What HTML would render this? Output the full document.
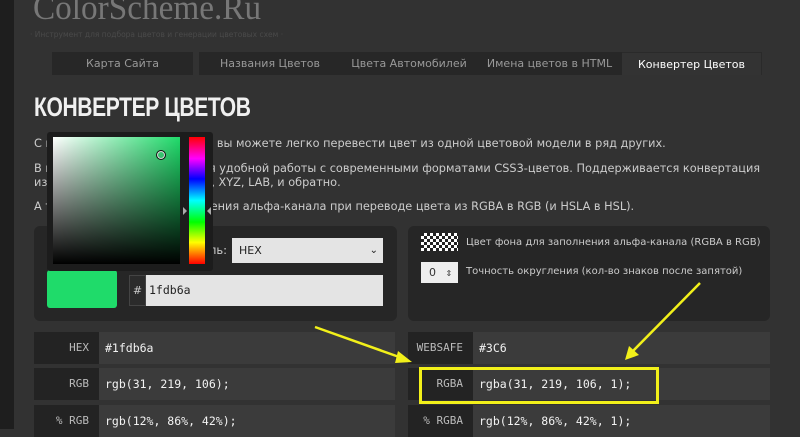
<!DOCTYPE html>
<html><head><meta charset="utf-8"><style>
*{margin:0;padding:0;box-sizing:border-box}
body{width:800px;height:429px;overflow:hidden;background:#323232;font-family:"DejaVu Sans","Liberation Sans",sans-serif;color:#ddd;position:relative}
.abs{position:absolute}
.logo{left:33px;top:-12px;font-family:"Liberation Serif",serif;font-size:35px;color:#777;transform:scaleX(.95);transform-origin:left}
.sub{left:30px;top:30px;font-size:7.5px;color:#4a4a4a}
.nav{top:52px;height:23px;background:#272727;font-size:11px;color:#999;text-align:center;line-height:23px}
h1{position:absolute;left:34px;top:92px;font-family:"Liberation Sans",sans-serif;font-weight:bold;font-size:27px;color:#f0f0f0;transform:scaleX(.78);transform-origin:left;letter-spacing:-0.5px}
.p{left:34px;font-size:11.3px;color:#ccc;white-space:nowrap}
.panel{background:#262626;border-radius:6px}
.lab{background:#232323;color:#bbb;font-size:11px;text-align:right;padding-right:10px;line-height:32px;font-family:"DejaVu Sans Mono",monospace}
.val{background:#3b3b3b;color:#f2f2f2;font-size:11.5px;padding-left:6px;line-height:32px;font-family:"DejaVu Sans Mono",monospace}
</style></head><body>
<div class="abs" style="left:0;top:0;width:14px;height:429px;background:#1e1e1e"></div>
<div class="abs logo">ColorScheme.Ru</div>
<div class="abs sub">· Инструмент для подбора цветов и генерации цветовых схем ·</div>
<div class="abs nav" style="left:52px;width:141px">Карта Сайта</div>
<div class="abs nav" style="left:199px;width:142px">Названия Цветов</div>
<div class="abs nav" style="left:341px;width:136px">Цвета Автомобилей</div>
<div class="abs nav" style="left:477px;width:145px">Имена цветов в HTML</div>
<div class="abs nav" style="left:622px;width:140px;background:#333;color:#fff;border-top:1px solid #2a2a2a;border-right:1px solid #2a2a2a">Конвертер Цветов</div>
<h1>КОНВЕРТЕР ЦВЕТОВ</h1>
<div class="abs p" style="top:137px">С помощью конвертер цветов вы можете легко перевести цвет из одной цветовой модели в ряд других.</div>
<div class="abs p" style="top:162px;line-height:14px">В первую очередь служит для удобной работы с современными форматами CSS3-цветов. Поддерживается конвертация<br>из HEX, HSL, HSV, RGB в CMYK, XYZ, LAB, и обратно.</div>
<div class="abs p" style="top:200px">А также интервал для замещения альфа-канала при переводе цвета из RGBA в RGB (и HSLA в HSL).</div>

<div class="abs panel" style="left:34px;top:226px;width:363px;height:95px"></div>
<div class="abs" style="left:209px;top:243px;font-size:11.5px;color:#ccc">ль:</div>
<div class="abs" style="left:232px;top:238px;width:151px;height:25px;background:#e4e4e4;color:#222;font-size:11px;line-height:25px;padding-left:7px">HEX<span style="position:absolute;right:5px;font-size:10px">&#8964;</span></div>
<div class="abs" style="left:47px;top:270px;width:70px;height:38px;background:#1fdb6a;border-radius:3px"></div>
<div class="abs" style="left:129px;top:275px;width:17px;height:31px;background:#2b2b2b;border:1px solid #444;color:#ccc;font-size:11px;line-height:29px;text-align:center">#</div>
<div class="abs" style="left:146px;top:275px;width:237px;height:31px;background:#e4e4e4;color:#222;font-size:11.5px;line-height:31px;padding-left:3px;font-family:'DejaVu Sans Mono',monospace">1fdb6a</div>

<div class="abs panel" style="left:408px;top:226px;width:362px;height:95px"></div>
<div class="abs" style="left:421px;top:233px;width:37px;height:18px;background:repeating-conic-gradient(#fff 0 25%,#222 0 50%) 0 0/6px 6px"></div>
<div class="abs" style="left:466px;top:237px;font-size:10px;color:#ccc">Цвет фона для заполнения альфа-канала (RGBA в RGB)</div>
<div class="abs" style="left:421px;top:262px;width:37px;height:21px;background:#eee;color:#333;font-size:11px;line-height:21px;padding-left:8px">0 <span style="font-size:8px;margin-left:6px">&#8661;</span></div>
<div class="abs" style="left:466px;top:266px;font-size:10px;color:#ccc">Точность округления (кол-во знаков после запятой)</div>

<div class="abs lab" style="left:34px;top:332px;width:65px;height:32px">HEX</div><div class="abs val" style="left:99px;top:332px;width:296px;height:32px">#1fdb6a</div>
<div class="abs lab" style="left:34px;top:368px;width:65px;height:32px">RGB</div><div class="abs val" style="left:99px;top:368px;width:296px;height:32px">rgb(31, 219, 106);</div>
<div class="abs lab" style="left:34px;top:405px;width:65px;height:32px">% RGB</div><div class="abs val" style="left:99px;top:405px;width:296px;height:32px">rgb(12%, 86%, 42%);</div>
<div class="abs lab" style="left:408px;top:332px;width:65px;height:32px">WEBSAFE</div><div class="abs val" style="left:473px;top:332px;width:297px;height:32px">#3C6</div>
<div class="abs lab" style="left:408px;top:368px;width:65px;height:32px">RGBA</div><div class="abs val" style="left:473px;top:368px;width:297px;height:32px">rgba(31, 219, 106, 1);</div>
<div class="abs lab" style="left:408px;top:405px;width:65px;height:32px">% RGBA</div><div class="abs val" style="left:473px;top:405px;width:297px;height:32px">rgb(12%, 86%, 42%, 1);</div>
<div class="abs" style="left:419px;top:367px;width:240px;height:37px;border:3px solid #f2f01a"></div>

<div class="abs" style="left:47px;top:132px;width:166px;height:139px;background:#1c1c1c;border-radius:3px"></div>
<div class="abs" style="left:53px;top:137px;width:127px;height:127px;background:linear-gradient(to top,#000,transparent),linear-gradient(to right,#fff,#1fdb6a)"></div>
<div class="abs" style="left:156px;top:150px;width:10px;height:10px;border:1px solid #111;border-radius:50%;box-shadow:0 0 0 1px #ddd inset"></div>
<div class="abs" style="left:189px;top:137px;width:16px;height:127px;background:linear-gradient(#f00,#f0f 17%,#00f 33%,#0ff 50%,#0f0 67%,#ff0 83%,#f00)"></div>
<div class="abs" style="left:183px;top:207px;width:0;height:0;border:4px solid transparent;border-left-color:#aaa"></div>
<div class="abs" style="left:203px;top:207px;width:0;height:0;border:4px solid transparent;border-right-color:#aaa"></div>

<svg class="abs" style="left:0;top:0" width="800" height="429">
<g stroke="#f2f01a" stroke-width="2.5" fill="#f2f01a">
<line x1="315" y1="327" x2="402" y2="358"/><polygon points="412,362 398,351 395,363" stroke="none"/>
<line x1="700" y1="283" x2="632" y2="352"/><polygon points="625,360 629,346 639,355" stroke="none"/>
</g></svg>
</body></html>
